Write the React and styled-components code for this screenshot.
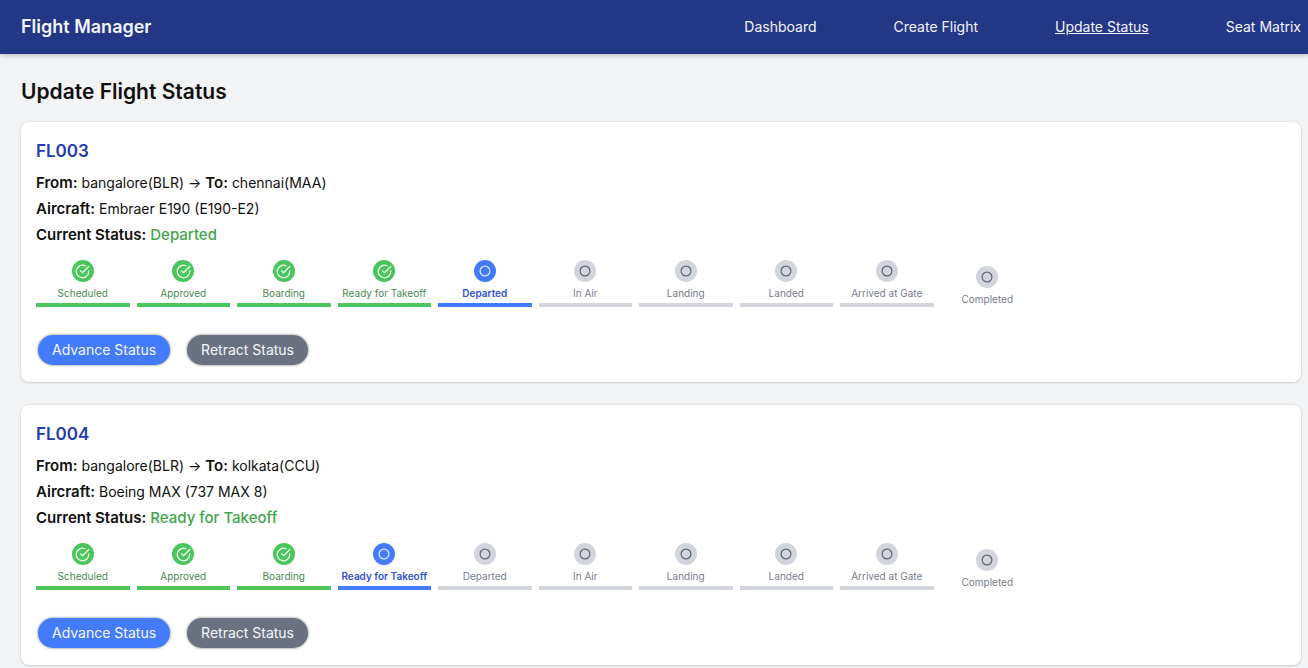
import React from "react";
import styled, { createGlobalStyle, css } from "styled-components";

const GlobalStyle = createGlobalStyle`
  *, *::before, *::after { box-sizing: border-box; }
  body {
    margin: 0;
    background: #f2f3f5;
    color: #101010;
    font-family: Inter, "Liberation Sans", sans-serif;
    font-size: 14px;
    line-height: 26px;
  }
`;

const Header = styled.header`
  display: flex;
  align-items: center;
  justify-content: space-between;
  height: 54px;
  padding: 0 7px 0 21px;
  background: #233787;
  color: #f3f5fb;
  box-shadow: 0 1px 5px rgba(0, 0, 0, 0.25);
`;

const Brand = styled.h1`
  margin: 0;
  font-size: 18px;
  font-weight: 600;
`;

const Nav = styled.nav`
  display: flex;
  gap: 77px;
`;

const NavLink = styled.a`
  color: inherit;
  white-space: nowrap;
  text-decoration: ${({ $active }) => ($active ? "underline" : "none")};
`;

const Main = styled.main`
  padding: 24px 7px 24px 21px;
`;

const PageTitle = styled.h2`
  margin: 0 0 16px;
  font-size: 21px;
  font-weight: 600;
  line-height: 28px;
`;

const CardList = styled.div`
  display: flex;
  flex-direction: column;
  gap: 23px;
`;

const Card = styled.article`
  padding: 17px 15px;
  border-radius: 8px;
  background: #fff;
  box-shadow: 0 0 2px 1px rgba(0, 0, 0, 0.06), 0 1px 2px rgba(0, 0, 0, 0.12);
`;

const FlightCode = styled.h3`
  margin: 0 0 7px;
  color: #223bb0;
  font-size: 17px;
  font-weight: 600;
  line-height: 24px;
`;

const Detail = styled.p`
  height: 26px;
  margin: 0;

  strong {
    font-size: 15px;
    font-weight: 600;
  }
`;

const CurrentStatus = styled.span`
  color: #3fa64b;
  font-size: 15px;
  font-weight: 500;
`;

const Steps = styled.ol`
  display: grid;
  grid-template-columns: repeat(10, 1fr);
  align-items: center;
  gap: 7px;
  max-width: 998px;
  margin: 12px 0 28px;
  padding: 0;
  list-style: none;
`;

const tones = {
  done: { dot: "#4bc65c", icon: "#f4fff5", text: "#48894f", weight: 400 },
  current: { dot: "#427bfb", icon: "#dce7ff", text: "#3050dc", weight: 600 },
  pending: { dot: "#d2d5dc", icon: "#5d6574", text: "#777d8b", weight: 400 },
};

const Step = styled.li`
  display: flex;
  flex-direction: column;
  align-items: center;
  color: ${({ $tone }) => tones[$tone].text};
  font-size: 10px;
  font-weight: ${({ $tone }) => tones[$tone].weight};
  line-height: 14px;
  white-space: nowrap;

  ${({ $last, $tone }) =>
    $last
      ? css`
          padding-top: 4px;
        `
      : css`
          padding-bottom: 3px;
          border-bottom: 4px solid ${tones[$tone].dot};
        `}
`;

const Dot = styled.span`
  display: grid;
  place-items: center;
  width: 22px;
  height: 22px;
  margin-bottom: 4px;
  border-radius: 50%;
  background: ${({ $tone }) => tones[$tone].dot};
  color: ${({ $tone }) => tones[$tone].icon};
`;

const Actions = styled.div`
  display: flex;
  gap: 17px;
  padding: 0 2px;
`;

const Button = styled.button`
  height: 30px;
  padding: 0 14px;
  border: 0;
  border-radius: 15px;
  background: ${({ $primary }) => ($primary ? "#427bfb" : "#6a7180")};
  color: #f5f7fc;
  font: inherit;
  white-space: nowrap;
  cursor: pointer;
  box-shadow: 0 0 2px 1px rgba(0, 0, 0, 0.25);
`;

const CheckIcon = () => (
  <svg width="15" height="15" viewBox="0 0 24 24" fill="none" stroke="currentColor" strokeWidth="2" strokeLinecap="round" strokeLinejoin="round" aria-hidden="true">
    <path d="M22 11.08V12a10 10 0 1 1-5.93-9.14" />
    <path d="M22 4 12 14.01l-3-3" />
  </svg>
);

const CircleIcon = () => (
  <svg width="12" height="12" viewBox="0 0 12 12" fill="none" stroke="currentColor" strokeWidth="1.2" aria-hidden="true">
    <circle cx="6" cy="6" r="4.9" />
  </svg>
);

const links = ["Dashboard", "Create Flight", "Update Status", "Seat Matrix"];

const stages = [
  "Scheduled", "Approved", "Boarding", "Ready for Takeoff", "Departed",
  "In Air", "Landing", "Landed", "Arrived at Gate", "Completed",
];

const flights = [
  { code: "FL003", from: "bangalore(BLR)", to: "chennai(MAA)", aircraft: "Embraer E190 (E190-E2)", stage: 4 },
  { code: "FL004", from: "bangalore(BLR)", to: "kolkata(CCU)", aircraft: "Boeing MAX (737 MAX 8)", stage: 3 },
];

const toneOf = (index, stage) =>
  index < stage ? "done" : index === stage ? "current" : "pending";

function StatusTracker({ stage }) {
  return (
    <Steps>
      {stages.map((name, i) => {
        const tone = toneOf(i, stage);
        return (
          <Step key={name} $tone={tone} $last={i === stages.length - 1} aria-current={tone === "current" ? "step" : undefined}>
            <Dot $tone={tone}>{tone === "done" ? <CheckIcon /> : <CircleIcon />}</Dot>
            {name}
          </Step>
        );
      })}
    </Steps>
  );
}

function FlightCard({ flight }) {
  return (
    <Card>
      <FlightCode>{flight.code}</FlightCode>
      <Detail><strong>From:</strong> {flight.from} → <strong>To:</strong> {flight.to}</Detail>
      <Detail><strong>Aircraft:</strong> {flight.aircraft}</Detail>
      <Detail><strong>Current Status:</strong> <CurrentStatus>{stages[flight.stage]}</CurrentStatus></Detail>
      <StatusTracker stage={flight.stage} />
      <Actions>
        <Button type="button" $primary>Advance Status</Button>
        <Button type="button">Retract Status</Button>
      </Actions>
    </Card>
  );
}

export default function App() {
  return (
    <>
      <GlobalStyle />
      <Header>
        <Brand>Flight Manager</Brand>
        <Nav>
          {links.map((name) => (
            <NavLink key={name} href="#" $active={name === "Update Status"}>{name}</NavLink>
          ))}
        </Nav>
      </Header>
      <Main>
        <PageTitle>Update Flight Status</PageTitle>
        <CardList>
          {flights.map((flight) => <FlightCard key={flight.code} flight={flight} />)}
        </CardList>
      </Main>
    </>
  );
}
